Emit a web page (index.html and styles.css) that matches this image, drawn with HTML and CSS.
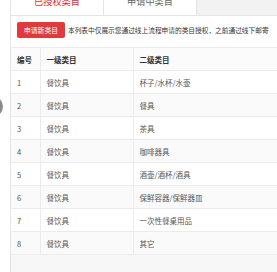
FILE: index.html
```html
<!DOCTYPE html>
<html lang="zh">
<head>
<meta charset="utf-8">
<link rel="stylesheet" href="styles.css">
</head>
<body>
<div class="wrap">
  <div class="tabs">
    <div class="tab active">已授权类目</div>
    <div class="tab">申请中类目</div>
  </div>
  <div class="content">
    <div class="toolbar">
      <button class="btn">申请新类目</button>
      <span class="desc">本列表中仅展示您通过线上流程申请的类目授权，之前通过线下邮寄</span>
    </div>
    <table class="grid">
      <colgroup><col class="c1"><col class="c2"><col class="c3"></colgroup>
      <thead>
        <tr><th>编号</th><th>一级类目</th><th>二级类目</th></tr>
      </thead>
      <tbody>
        <tr><td>1</td><td>餐饮具</td><td>杯子/水杯/水壶</td></tr>
        <tr><td>2</td><td>餐饮具</td><td>餐具</td></tr>
        <tr><td>3</td><td>餐饮具</td><td>茶具</td></tr>
        <tr><td>4</td><td>餐饮具</td><td>咖啡器具</td></tr>
        <tr><td>5</td><td>餐饮具</td><td>酒壶/酒杯/酒具</td></tr>
        <tr><td>6</td><td>餐饮具</td><td>保鲜容器/保鲜器皿</td></tr>
        <tr><td>7</td><td>餐饮具</td><td>一次性餐桌用品</td></tr>
        <tr><td>8</td><td>餐饮具</td><td>其它</td></tr>
      </tbody>
    </table>
  </div>
</div>
<div class="knob"></div>
</body>
</html>
```

FILE: styles.css
```css
html, body {
  margin: 0;
  padding: 0;
  background: #fff;
}
body {
  width: 277px;
  height: 272px;
  overflow: hidden;
  position: relative;
  font-family: "Noto Sans CJK SC", "Microsoft YaHei", sans-serif;
}
.wrap {
  margin-left: 10px;
  margin-top: -12px;
  border-left: 1px solid #e4e4e4;
  height: 284px;
  display: flex;
  flex-direction: column;
}
.tabs {
  display: flex;
  height: 27px;
  background: #f2f2f2;
  border-bottom: 1px solid #e4e4e4;
  flex: none;
}
.tab {
  width: 92px;
  background: #fff;
  border-right: 1px solid #e4e4e4;
  text-align: center;
  font-size: 9.2px;
  line-height: 27px;
  color: #666;
}
.tab.active {
  color: #e0272c;
}
.content {
  flex: 1;
  background: #f7f7f7;
}
.toolbar {
  background: #fff;
  padding: 6px 0 9px 6px;
  display: flex;
  align-items: center;
  white-space: nowrap;
  overflow: hidden;
}
.btn {
  flex: none;
  width: 48px;
  height: 16px;
  padding: 0;
  border: none;
  border-radius: 2px;
  background: #e23a3c;
  color: #fff;
  font-family: inherit;
  font-size: 6.8px;
  line-height: 16px;
}
.desc {
  margin-left: 3px;
  font-size: 6.7px;
  color: #333;
  overflow: hidden;
}
.grid {
  border-collapse: collapse;
  width: 100%;
  table-layout: fixed;
  background: #fff;
  font-size: 7.5px;
}
.c1 { width: 29px; }
.c2 { width: 93px; }
.grid th,
.grid td {
  height: 22px;
  padding: 0 0 0 6px;
  text-align: left;
  border-top: 1px solid #ebebeb;
  border-bottom: 1px solid #ebebeb;
  border-left: 1px solid #ebebeb;
  vertical-align: middle;
  white-space: nowrap;
}
.grid th:first-child,
.grid td:first-child {
  border-left: none;
}
.grid th {
  font-weight: bold;
  color: #333;
  background: #fbfbfb;
}
.grid td {
  color: #555;
}
.grid tbody tr:nth-child(even) td {
  background: #fafafa;
}
.knob {
  position: absolute;
  left: -18px;
  top: 96px;
  width: 21px;
  height: 21px;
  border-radius: 50%;
  background: #8c8c8c;
  filter: blur(0.5px);
}
```
